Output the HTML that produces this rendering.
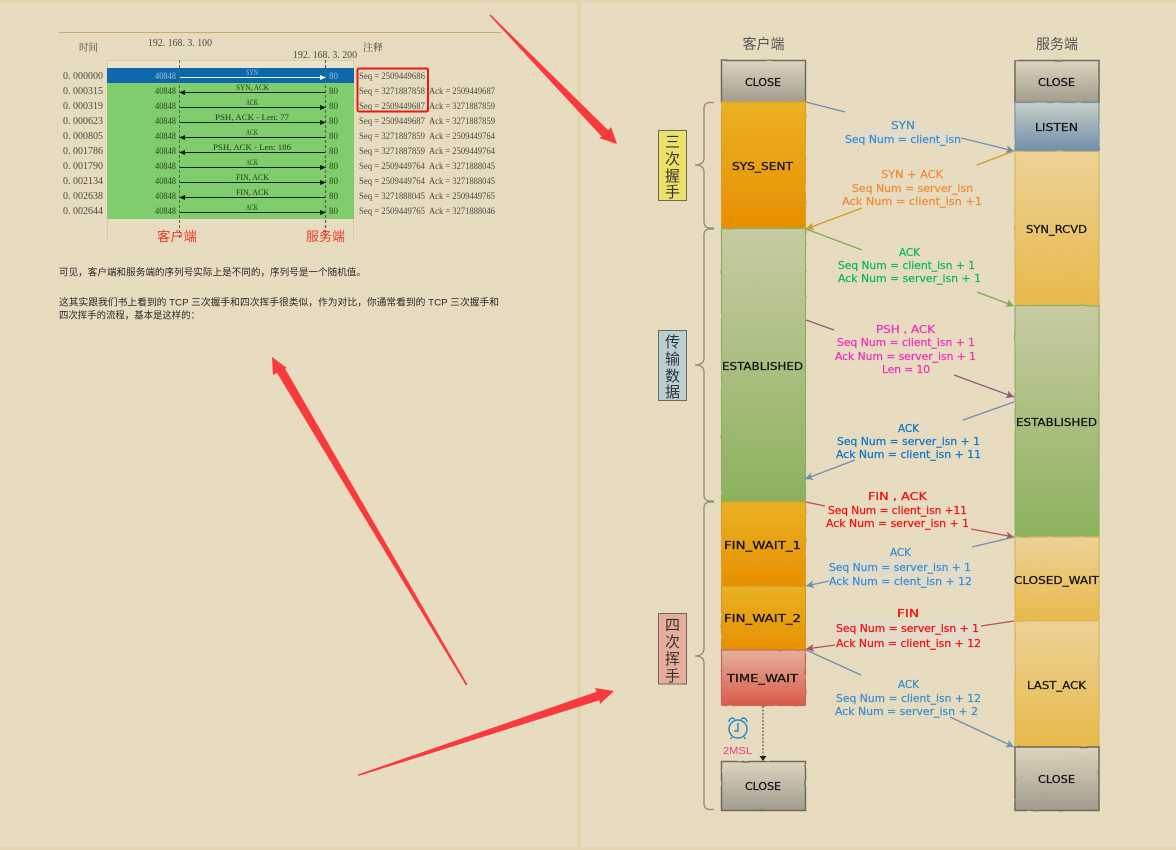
<!DOCTYPE html>
<html lang="zh">
<head>
<meta charset="utf-8">
<title>TCP</title>
<style>
html,body{margin:0;padding:0;width:1176px;height:850px;overflow:hidden;background:#e3d5b0}
svg{position:absolute;left:0;top:0;display:block}
.s{font-family:"Liberation Serif","Noto Serif CJK SC",serif;font-size:9px;fill:#4c4a40}
.t{font-family:"Liberation Serif","Noto Serif CJK SC",serif;font-size:10px;fill:#4c4a40}
.a{font-family:"Liberation Serif",serif;font-size:8px;fill:#1c3a18}
.b{font-family:"Liberation Sans","Noto Sans CJK SC",sans-serif;font-size:9.6px;fill:#2c2a26}
.st{font-family:"DejaVu Sans",sans-serif;font-size:10.5px;fill:#111;stroke:#111;stroke-width:.25}
.m{font-family:"DejaVu Sans",sans-serif;font-size:10.5px;stroke-width:.25}
.v{font-family:"Noto Sans CJK SC",sans-serif;font-size:15px;fill:#333;text-anchor:middle}
.h{font-family:"Liberation Sans","Noto Sans CJK SC",sans-serif;font-size:14px;fill:#555;text-anchor:middle}
</style>
</head>
<body>
<svg width="1176" height="850" viewBox="0 0 1176 850" xmlns="http://www.w3.org/2000/svg">
<defs>
<filter id="bl" filterUnits="userSpaceOnUse" x="0" y="0" width="1176" height="850"><feGaussianBlur stdDeviation="0.3"/></filter>
<filter id="sk" filterUnits="userSpaceOnUse" x="600" y="0" width="576" height="850"><feTurbulence type="fractalNoise" baseFrequency="0.09" numOctaves="2" seed="4"/><feDisplacementMap in="SourceGraphic" scale="1.2" xChannelSelector="R" yChannelSelector="G"/></filter>
<linearGradient id="gc" x1="0" y1="0" x2="0" y2="1"><stop offset="0" stop-color="#ded5bf"/><stop offset="1" stop-color="#a29c8b"/></linearGradient>
<linearGradient id="go" x1="0" y1="0" x2="0" y2="1"><stop offset="0" stop-color="#e9b224"/><stop offset="1" stop-color="#e88f00"/></linearGradient>
<linearGradient id="ge" x1="0" y1="0" x2="0" y2="1"><stop offset="0" stop-color="#c7cba2"/><stop offset="1" stop-color="#8cb25e"/></linearGradient>
<linearGradient id="gl" x1="0" y1="0" x2="0" y2="1"><stop offset="0" stop-color="#c8d0c6"/><stop offset="1" stop-color="#6e8eac"/></linearGradient>
<linearGradient id="gy" x1="0" y1="0" x2="0" y2="1"><stop offset="0" stop-color="#ecd297"/><stop offset="1" stop-color="#e8b94a"/></linearGradient>
<linearGradient id="gr" x1="0" y1="0" x2="0" y2="1"><stop offset="0" stop-color="#e5b09b"/><stop offset="1" stop-color="#d95a4c"/></linearGradient>
<marker id="mb" markerUnits="userSpaceOnUse" markerWidth="10" markerHeight="10" refX="8" refY="4" orient="auto"><path d="M0 0L8 4L0 8L2 4z" fill="#6f8fb0"/></marker>
<marker id="mo" markerUnits="userSpaceOnUse" markerWidth="10" markerHeight="10" refX="8" refY="4" orient="auto"><path d="M0 0L8 4L0 8L2 4z" fill="#d49a1e"/></marker>
<marker id="mg" markerUnits="userSpaceOnUse" markerWidth="10" markerHeight="10" refX="8" refY="4" orient="auto"><path d="M0 0L8 4L0 8L2 4z" fill="#7faa55"/></marker>
<marker id="mp" markerUnits="userSpaceOnUse" markerWidth="10" markerHeight="10" refX="8" refY="4" orient="auto"><path d="M0 0L8 4L0 8L2 4z" fill="#8e5a7a"/></marker>
<marker id="mr" markerUnits="userSpaceOnUse" markerWidth="10" markerHeight="10" refX="8" refY="4" orient="auto"><path d="M0 0L8 4L0 8L2 4z" fill="#b5505a"/></marker>
</defs>

<!-- pages -->
<rect x="0" y="3" width="577" height="844" fill="#e8dcc0"/>
<rect x="581" y="3" width="595" height="844" fill="#e8dcc0"/>

<!-- left page figure -->
<g filter="url(#bl)">
<line x1="59" y1="32.5" x2="501" y2="32.5" stroke="#c9aa74" stroke-width="1"/>
<text class="t" x="79" y="51" textLength="19" lengthAdjust="spacingAndGlyphs">时间</text>
<text class="t" x="148" y="46" textLength="64" lengthAdjust="spacingAndGlyphs">192. 168. 3. 100</text>
<text class="t" x="293" y="58" textLength="64" lengthAdjust="spacingAndGlyphs">192. 168. 3. 200</text>
<text class="t" x="363" y="51" textLength="20" lengthAdjust="spacingAndGlyphs">注释</text>

<rect x="107.5" y="60.5" width="246" height="8" fill="#ebe3cc" stroke="#d6cdb4"/>
<line x1="107.5" y1="60" x2="107.5" y2="240" stroke="#d2c9b0"/>
<line x1="353.5" y1="60" x2="353.5" y2="240" stroke="#d2c9b0"/>
<rect x="107" y="83" width="247" height="136" fill="#7fcd6c"/>
<rect x="107" y="68" width="247" height="15" fill="#0a68ab"/>
<line x1="179.5" y1="60" x2="179.5" y2="240" stroke="#5a6a4c" stroke-dasharray="3 2"/>
<line x1="325.5" y1="60" x2="325.5" y2="240" stroke="#5a6a4c" stroke-dasharray="3 2" stroke-width="1.3"/>

<text class="t" x="63" y="79" textLength="40" lengthAdjust="spacingAndGlyphs">0. 000000</text>
<text class="t" x="63" y="94" textLength="40" lengthAdjust="spacingAndGlyphs">0. 000315</text>
<text class="t" x="63" y="109" textLength="40" lengthAdjust="spacingAndGlyphs">0. 000319</text>
<text class="t" x="63" y="124" textLength="40" lengthAdjust="spacingAndGlyphs">0. 000623</text>
<text class="t" x="63" y="139" textLength="40" lengthAdjust="spacingAndGlyphs">0. 000805</text>
<text class="t" x="63" y="154" textLength="40" lengthAdjust="spacingAndGlyphs">0. 001786</text>
<text class="t" x="63" y="169" textLength="40" lengthAdjust="spacingAndGlyphs">0. 001790</text>
<text class="t" x="63" y="184" textLength="40" lengthAdjust="spacingAndGlyphs">0. 002134</text>
<text class="t" x="63" y="199" textLength="40" lengthAdjust="spacingAndGlyphs">0. 002638</text>
<text class="t" x="63" y="214" textLength="40" lengthAdjust="spacingAndGlyphs">0. 002644</text>

<g>
<text class="s" style="fill:#9cc0d8" x="155" y="79" textLength="21" lengthAdjust="spacingAndGlyphs">40848</text>
<text class="s" style="fill:#9cc0d8" x="329" y="79">80</text>
<text class="s" style="fill:#2a4525" x="155" y="94" textLength="21" lengthAdjust="spacingAndGlyphs">40848</text><text class="s" style="fill:#2a4525" x="329" y="94">80</text>
<text class="s" style="fill:#2a4525" x="155" y="109" textLength="21" lengthAdjust="spacingAndGlyphs">40848</text><text class="s" style="fill:#2a4525" x="329" y="109">80</text>
<text class="s" style="fill:#2a4525" x="155" y="124" textLength="21" lengthAdjust="spacingAndGlyphs">40848</text><text class="s" style="fill:#2a4525" x="329" y="124">80</text>
<text class="s" style="fill:#2a4525" x="155" y="139" textLength="21" lengthAdjust="spacingAndGlyphs">40848</text><text class="s" style="fill:#2a4525" x="329" y="139">80</text>
<text class="s" style="fill:#2a4525" x="155" y="154" textLength="21" lengthAdjust="spacingAndGlyphs">40848</text><text class="s" style="fill:#2a4525" x="329" y="154">80</text>
<text class="s" style="fill:#2a4525" x="155" y="169" textLength="21" lengthAdjust="spacingAndGlyphs">40848</text><text class="s" style="fill:#2a4525" x="329" y="169">80</text>
<text class="s" style="fill:#2a4525" x="155" y="184" textLength="21" lengthAdjust="spacingAndGlyphs">40848</text><text class="s" style="fill:#2a4525" x="329" y="184">80</text>
<text class="s" style="fill:#2a4525" x="155" y="199" textLength="21" lengthAdjust="spacingAndGlyphs">40848</text><text class="s" style="fill:#2a4525" x="329" y="199">80</text>
<text class="s" style="fill:#2a4525" x="155" y="214" textLength="21" lengthAdjust="spacingAndGlyphs">40848</text><text class="s" style="fill:#2a4525" x="329" y="214">80</text>
</g>

<!-- arrows -->
<g stroke="#10240f" stroke-width="1">
<line x1="180" y1="77.5" x2="320" y2="77.5" stroke="#e8f2f6"/>
<line x1="184" y1="92.5" x2="325" y2="92.5"/>
<line x1="180" y1="107.5" x2="320" y2="107.5"/>
<line x1="180" y1="122.5" x2="320" y2="122.5"/>
<line x1="184" y1="137.5" x2="325" y2="137.5"/>
<line x1="184" y1="152.5" x2="325" y2="152.5"/>
<line x1="180" y1="167.5" x2="320" y2="167.5"/>
<line x1="180" y1="182.5" x2="320" y2="182.5"/>
<line x1="184" y1="197.5" x2="325" y2="197.5"/>
<line x1="180" y1="212.5" x2="320" y2="212.5"/>
</g>
<path d="M320 75L326 77.5L320 80z" fill="#e8f2f6"/>
<g fill="#0a1a0a">
<path d="M185 90L179 92.5L185 95z"/>
<path d="M320 105L326 107.5L320 110z"/>
<path d="M320 120L326 122.5L320 125z"/>
<path d="M185 135L179 137.5L185 140z"/>
<path d="M185 150L179 152.5L185 155z"/>
<path d="M320 165L326 167.5L320 170z"/>
<path d="M320 180L326 182.5L320 185z"/>
<path d="M185 195L179 197.5L185 200z"/>
<path d="M320 210L326 212.5L320 215z"/>
</g>
<text class="a" style="fill:#9cc0d8" x="246" y="75" textLength="12" lengthAdjust="spacingAndGlyphs">SYN</text>
<text class="a" x="236" y="90" textLength="33" lengthAdjust="spacingAndGlyphs">SYN, ACK</text>
<text class="a" x="246" y="105" textLength="12" lengthAdjust="spacingAndGlyphs">ACK</text>
<text class="a" x="215" y="120" textLength="74" lengthAdjust="spacingAndGlyphs">PSH, ACK - Len: 77</text>
<text class="a" x="246" y="135" textLength="12" lengthAdjust="spacingAndGlyphs">ACK</text>
<text class="a" x="213" y="150" textLength="78" lengthAdjust="spacingAndGlyphs">PSH, ACK - Len: 186</text>
<text class="a" x="246" y="165" textLength="12" lengthAdjust="spacingAndGlyphs">ACK</text>
<text class="a" x="236" y="180" textLength="33" lengthAdjust="spacingAndGlyphs">FIN, ACK</text>
<text class="a" x="236" y="195" textLength="33" lengthAdjust="spacingAndGlyphs">FIN, ACK</text>
<text class="a" x="246" y="210" textLength="12" lengthAdjust="spacingAndGlyphs">ACK</text>

<text class="s" x="359" y="79" textLength="66" lengthAdjust="spacingAndGlyphs">Seq = 2509449686</text>
<text class="s" x="359" y="94" textLength="66" lengthAdjust="spacingAndGlyphs">Seq = 3271887858</text><text class="s" x="429" y="94" textLength="66" lengthAdjust="spacingAndGlyphs">Ack = 2509449687</text>
<text class="s" x="359" y="109" textLength="66" lengthAdjust="spacingAndGlyphs">Seq = 2509449687</text><text class="s" x="429" y="109" textLength="66" lengthAdjust="spacingAndGlyphs">Ack = 3271887859</text>
<text class="s" x="359" y="124" textLength="66" lengthAdjust="spacingAndGlyphs">Seq = 2509449687</text><text class="s" x="429" y="124" textLength="66" lengthAdjust="spacingAndGlyphs">Ack = 3271887859</text>
<text class="s" x="359" y="139" textLength="66" lengthAdjust="spacingAndGlyphs">Seq = 3271887859</text><text class="s" x="429" y="139" textLength="66" lengthAdjust="spacingAndGlyphs">Ack = 2509449764</text>
<text class="s" x="359" y="154" textLength="66" lengthAdjust="spacingAndGlyphs">Seq = 3271887859</text><text class="s" x="429" y="154" textLength="66" lengthAdjust="spacingAndGlyphs">Ack = 2509449764</text>
<text class="s" x="359" y="169" textLength="66" lengthAdjust="spacingAndGlyphs">Seq = 2509449764</text><text class="s" x="429" y="169" textLength="66" lengthAdjust="spacingAndGlyphs">Ack = 3271888045</text>
<text class="s" x="359" y="184" textLength="66" lengthAdjust="spacingAndGlyphs">Seq = 2509449764</text><text class="s" x="429" y="184" textLength="66" lengthAdjust="spacingAndGlyphs">Ack = 3271888045</text>
<text class="s" x="359" y="199" textLength="66" lengthAdjust="spacingAndGlyphs">Seq = 3271888045</text><text class="s" x="429" y="199" textLength="66" lengthAdjust="spacingAndGlyphs">Ack = 2509449765</text>
<text class="s" x="359" y="214" textLength="66" lengthAdjust="spacingAndGlyphs">Seq = 2509449765</text><text class="s" x="429" y="214" textLength="66" lengthAdjust="spacingAndGlyphs">Ack = 3271888046</text>

<rect x="357.5" y="68.5" width="70.5" height="43" rx="1.5" fill="none" stroke="#e41f16" stroke-width="2"/>

<text x="157" y="241" textLength="40" lengthAdjust="spacingAndGlyphs" style="font-family:'Noto Sans CJK SC',sans-serif;font-size:13px;fill:#ea3a26">客户端</text>
<text x="306" y="241" textLength="39" lengthAdjust="spacingAndGlyphs" style="font-family:'Noto Sans CJK SC',sans-serif;font-size:13px;fill:#ea3a26">服务端</text>

<text class="b" x="59" y="275.5" textLength="307" lengthAdjust="spacingAndGlyphs">可见，客户端和服务端的序列号实际上是不同的，序列号是一个随机值。</text>
<text class="b" x="59" y="305.5" textLength="440" lengthAdjust="spacingAndGlyphs">这其实跟我们书上看到的 TCP 三次握手和四次挥手很类似，作为对比，你通常看到的 TCP 三次握手和</text>
<text class="b" x="59" y="318.5" textLength="141" lengthAdjust="spacingAndGlyphs">四次挥手的流程，基本是这样的：</text>
</g>

<!-- right diagram -->
<text class="h" x="763.5" y="49">客户端</text>
<text class="h" x="1057" y="49">服务端</text>

<!-- braces -->
<g fill="none" stroke="#8f8b7d" stroke-width="1.3">
<path d="M714 102.5H710Q704 102.5 704 109V158Q704 165 695 165Q704 165 704 172V221Q704 228 710 228H714"/>
<path d="M714 229H710Q704 229 704 235V358Q704 365 695 365Q704 365 704 372V495Q704 501 710 501H714"/>
<path d="M714 502H710Q704 502 704 508V648Q704 656 695 656Q704 656 704 663V803Q704 809.500 710 809.500H714"/>
</g>

<g filter="url(#sk)">
<!-- left col -->
<rect x="721.5" y="60.5" width="84" height="42" fill="url(#gc)" stroke="#6e6a5e" stroke-width="1.5"/>
<rect x="721.5" y="102" width="84" height="126.5" fill="url(#go)" stroke="#d9a12c" stroke-width="1.2"/>
<rect x="721.5" y="228.5" width="84" height="273.5" fill="url(#ge)" stroke="#8fae62" stroke-width="1.2"/>
<rect x="721.5" y="502" width="84" height="84" fill="url(#go)" stroke="#d9a12c" stroke-width="1.2"/>
<rect x="721.5" y="586" width="84" height="64" fill="url(#go)" stroke="#d09a2c" stroke-width="1.2"/>
<rect x="721.5" y="650" width="84" height="55.5" fill="url(#gr)" stroke="#c4685a" stroke-width="1.2"/>
<rect x="721.5" y="761.5" width="84" height="49" fill="url(#gc)" stroke="#6e6a5e" stroke-width="1.5"/>
<!-- right col -->
<rect x="1015" y="60.5" width="84" height="42" fill="url(#gc)" stroke="#6e6a5e" stroke-width="1.5"/>
<rect x="1015" y="102.5" width="84" height="49" fill="url(#gl)" stroke="#7492b0" stroke-width="1.2"/>
<rect x="1015" y="151.5" width="84" height="154" fill="url(#gy)" stroke="#d9b35a" stroke-width="1.2"/>
<rect x="1015" y="305.5" width="84" height="232" fill="url(#ge)" stroke="#8fae62" stroke-width="1.2"/>
<rect x="1015" y="537" width="84" height="84" fill="url(#gy)" stroke="#d9b35a" stroke-width="1.2"/>
<rect x="1015" y="621" width="84" height="126" fill="url(#gy)" stroke="#d9b35a" stroke-width="1.2"/>
<rect x="1015" y="747" width="84" height="63.5" fill="url(#gc)" stroke="#6e6a5e" stroke-width="1.5"/>
</g>

<text class="st" x="745" y="86" textLength="36" lengthAdjust="spacingAndGlyphs">CLOSE</text>
<text class="st" x="732" y="170" textLength="61" lengthAdjust="spacingAndGlyphs">SYS_SENT</text>
<text class="st" x="722" y="370" textLength="81" lengthAdjust="spacingAndGlyphs">ESTABLISHED</text>
<text class="st" x="724" y="549" textLength="77" lengthAdjust="spacingAndGlyphs">FIN_WAIT_1</text>
<text class="st" x="724" y="622" textLength="77" lengthAdjust="spacingAndGlyphs">FIN_WAIT_2</text>
<text class="st" x="727" y="682" textLength="71" lengthAdjust="spacingAndGlyphs">TIME_WAIT</text>
<text class="st" x="745" y="790" textLength="36" lengthAdjust="spacingAndGlyphs">CLOSE</text>
<text class="st" x="1038" y="86" textLength="37" lengthAdjust="spacingAndGlyphs">CLOSE</text>
<text class="st" x="1035" y="131" textLength="43" lengthAdjust="spacingAndGlyphs">LISTEN</text>
<text class="st" x="1026" y="233" textLength="61" lengthAdjust="spacingAndGlyphs">SYN_RCVD</text>
<text class="st" x="1016" y="426" textLength="81" lengthAdjust="spacingAndGlyphs">ESTABLISHED</text>
<text class="st" x="1014" y="584" textLength="85" lengthAdjust="spacingAndGlyphs">CLOSED_WAIT</text>
<text class="st" x="1027" y="689" textLength="59" lengthAdjust="spacingAndGlyphs">LAST_ACK</text>
<text class="st" x="1038" y="783" textLength="37" lengthAdjust="spacingAndGlyphs">CLOSE</text>

<!-- side labels -->
<rect x="658.5" y="130.5" width="28" height="70" fill="#ece268" stroke="#6a6a60"/>
<text class="v" x="672.5" y="147">三</text><text class="v" x="672.5" y="164">次</text><text class="v" x="672.5" y="181">握</text><text class="v" x="672.5" y="197">手</text>
<rect x="658.5" y="330.5" width="28" height="70" fill="#b9cfd3" stroke="#6a6a60"/>
<text class="v" x="672.5" y="347">传</text><text class="v" x="672.5" y="364">输</text><text class="v" x="672.5" y="381">数</text><text class="v" x="672.5" y="397">据</text>
<rect x="658.5" y="613.5" width="28" height="70.5" fill="#e9ae9b" stroke="#6a6a60"/>
<text class="v" x="672.5" y="630">四</text><text class="v" x="672.5" y="647">次</text><text class="v" x="672.5" y="664">挥</text><text class="v" x="672.5" y="681">手</text>

<!-- flow lines -->
<g fill="none" stroke-width="1.3">
<path d="M806 102L845 112" stroke="#6f8fb0"/>
<path d="M961 138L1014 151" stroke="#6f8fb0" marker-end="url(#mb)"/>
<path d="M1014 151L977 165" stroke="#d49a1e"/>
<path d="M862 208L806 229" stroke="#d49a1e" marker-end="url(#mo)"/>
<path d="M806 229L862 250" stroke="#7faa55"/>
<path d="M977 292L1014 306" stroke="#7faa55" marker-end="url(#mg)"/>
<path d="M806 320L834 330" stroke="#8e5a7a"/>
<path d="M954 375L1014 397" stroke="#8e5a7a" marker-end="url(#mp)"/>
<path d="M1014 402L963 420" stroke="#6f8fb0"/>
<path d="M855 460L805 479" stroke="#6f8fb0" marker-end="url(#mb)"/>
<path d="M806 502L825 506" stroke="#b5505a"/>
<path d="M971 529L1014 537" stroke="#b5505a" marker-end="url(#mr)"/>
<path d="M1014 537L972 547" stroke="#6f8fb0"/>
<path d="M829 581L806 586" stroke="#6f8fb0" marker-end="url(#mb)"/>
<path d="M1014 621L981 626" stroke="#b5505a"/>
<path d="M835 645L806 649" stroke="#b5505a" marker-end="url(#mr)"/>
<path d="M806 650L861 675" stroke="#6f8fb0"/>
<path d="M950 717L1014 747" stroke="#6f8fb0" marker-end="url(#mb)"/>
</g>

<!-- message highlights -->
<rect x="845" y="129" width="116" height="15" fill="#e4dccb"/>
<rect x="829" y="558" width="143" height="29" fill="#e4dccb"/>
<rect x="836" y="619" width="145" height="30" fill="#e4dccb"/>

<!-- messages -->
<g fill="#3d8fd0" stroke="#3d8fd0">
<text class="m" x="891" y="129" textLength="24" lengthAdjust="spacingAndGlyphs">SYN</text>
<text class="m" x="845" y="143" textLength="116" lengthAdjust="spacingAndGlyphs">Seq Num = client_isn</text>
</g>
<g fill="#ef8c3a" stroke="#ef8c3a">
<text class="m" x="881" y="178" textLength="62" lengthAdjust="spacingAndGlyphs">SYN + ACK</text>
<text class="m" x="852" y="192" textLength="121" lengthAdjust="spacingAndGlyphs">Seq Num = server_isn</text>
<text class="m" x="842" y="205" textLength="140" lengthAdjust="spacingAndGlyphs">Ack Num =  client_isn +1</text>
</g>
<g fill="#0fb85a" stroke="#0fb85a">
<text class="m" x="899" y="256" textLength="21" lengthAdjust="spacingAndGlyphs">ACK</text>
<text class="m" x="838" y="269" textLength="137" lengthAdjust="spacingAndGlyphs">Seq Num = client_isn + 1</text>
<text class="m" x="838" y="282" textLength="143" lengthAdjust="spacingAndGlyphs">Ack Num = server_isn + 1</text>
</g>
<g fill="#ee2fc0" stroke="#ee2fc0">
<text class="m" x="876" y="333" textLength="59" lengthAdjust="spacingAndGlyphs">PSH , ACK</text>
<text class="m" x="837" y="346" textLength="138" lengthAdjust="spacingAndGlyphs">Seq Num = client_isn + 1</text>
<text class="m" x="835" y="360" textLength="141" lengthAdjust="spacingAndGlyphs">Ack Num = server_isn + 1</text>
<text class="m" x="882" y="373" textLength="48" lengthAdjust="spacingAndGlyphs">Len = 10</text>
</g>
<g fill="#0d78c8" stroke="#0d78c8">
<text class="m" x="898" y="432" textLength="21" lengthAdjust="spacingAndGlyphs">ACK</text>
<text class="m" x="837" y="445" textLength="143" lengthAdjust="spacingAndGlyphs">Seq Num = server_isn + 1</text>
<text class="m" x="836" y="458" textLength="145" lengthAdjust="spacingAndGlyphs">Ack Num = client_isn + 11</text>
</g>
<g fill="#f01010" stroke="#f01010">
<text class="m" x="868" y="500" textLength="59" lengthAdjust="spacingAndGlyphs">FIN , ACK</text>
<text class="m" x="828" y="514" textLength="139" lengthAdjust="spacingAndGlyphs">Seq Num = client_isn +11</text>
<text class="m" x="826" y="527" textLength="143" lengthAdjust="spacingAndGlyphs">Ack Num = server_isn + 1</text>
</g>
<g fill="#3d8fd0" stroke="#3d8fd0">
<text class="m" x="890" y="556" textLength="21" lengthAdjust="spacingAndGlyphs">ACK</text>
<text class="m" x="829" y="571" textLength="142" lengthAdjust="spacingAndGlyphs">Seq Num = server_isn + 1</text>
<text class="m" x="829" y="585" textLength="143" lengthAdjust="spacingAndGlyphs">Ack Num = clent_isn + 12</text>
</g>
<g fill="#f01010" stroke="#f01010">
<text class="m" x="897" y="617" textLength="22" lengthAdjust="spacingAndGlyphs">FIN</text>
<text class="m" x="836" y="632" textLength="143" lengthAdjust="spacingAndGlyphs">Seq Num = server_isn + 1</text>
<text class="m" x="836" y="647" textLength="145" lengthAdjust="spacingAndGlyphs">Ack Num = client_isn + 12</text>
</g>
<g fill="#3d8fd0" stroke="#3d8fd0">
<text class="m" x="898" y="688" textLength="21" lengthAdjust="spacingAndGlyphs">ACK</text>
<text class="m" x="836" y="702" textLength="145" lengthAdjust="spacingAndGlyphs">Seq Num = client_isn + 12</text>
<text class="m" x="835" y="715" textLength="143" lengthAdjust="spacingAndGlyphs">Ack Num = server_isn + 2</text>
</g>

<!-- timer -->
<line x1="763" y1="706" x2="763" y2="757" stroke="#777" stroke-width="1.5" stroke-dasharray="2 1.500"/>
<path d="M759.5 756H766.5L763 761z" fill="#222"/>
<g fill="none" stroke="#2a87c8" stroke-width="1.4">
<circle cx="738" cy="729" r="9"/>
<path d="M738 723V731H734"/>
<path d="M729 722Q729.5 718 733 718L735 719.5M747 722Q746.500 718 743 718L741 719.5"/>
<path d="M732 737L730.500 739M744 737L745.500 739"/>
</g>
<text x="723" y="754" textLength="29" lengthAdjust="spacingAndGlyphs" style="font-family:'Liberation Sans',sans-serif;font-size:10px;fill:#e83a80">2MSL</text>

<!-- red pointers -->
<g fill="#f93a3c">
<path d="M489.500 15.500L490.500 14.500L608.200 130.300L611 127L617 144L599 138L601.800 136.700z"/>
<path d="M466 685.500L467.500 684.500L285 368.500L287 368L272 357L273 375L277 373z"/>
<path d="M358 774.500L358.500 776L599.400 700.300L600 704L614 691L595 688L596.600 691.700z"/>
</g>
</svg>
</body>
</html>
